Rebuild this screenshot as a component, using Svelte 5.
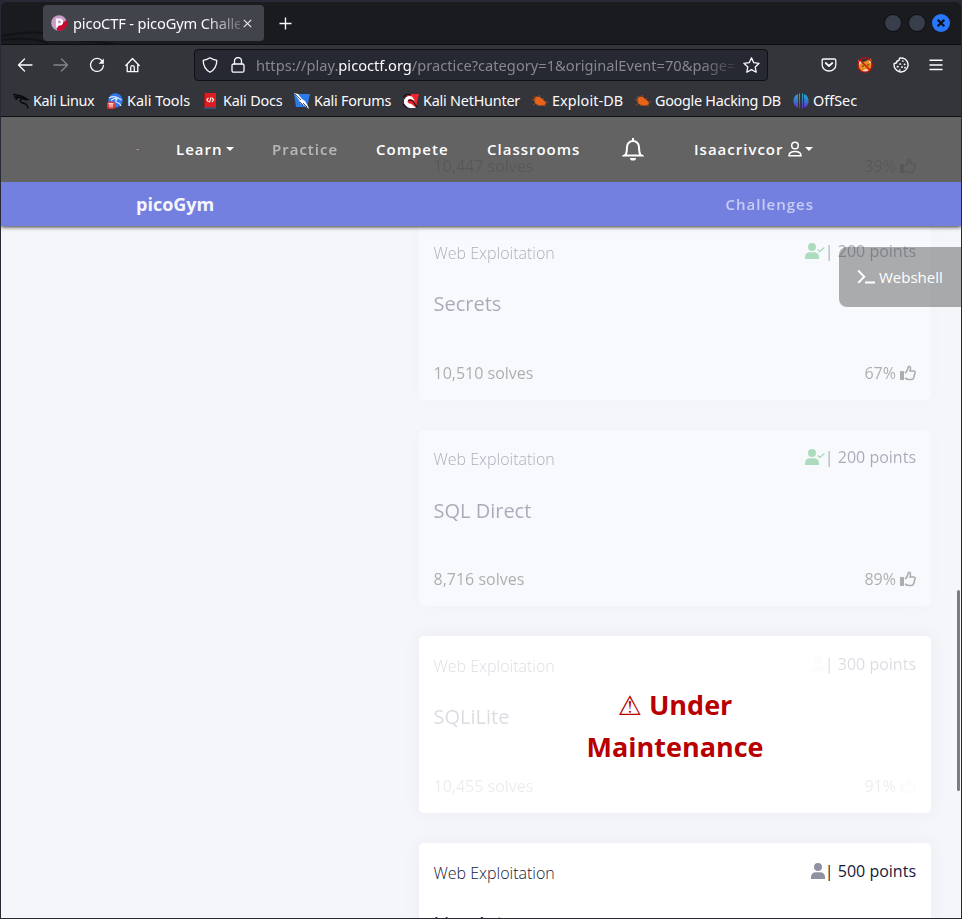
<script>
  const bookmarks = [
    { label: 'Kali Linux', icon: 'dragon', w: 94, spacing: -0.35 },
    { label: 'Kali Tools', icon: 'tools', w: 96, spacing: 0 },
    { label: 'Kali Docs', icon: 'docs', w: 91, spacing: -0.2 },
    { label: 'Kali Forums', icon: 'forums', w: 109, spacing: -0.22 },
    { label: 'Kali NetHunter', icon: 'hunter', w: 129, spacing: -0.22 },
    { label: 'Exploit-DB', icon: 'bug', w: 103, spacing: 0.1 },
    { label: 'Google Hacking DB', icon: 'bug', w: 158, spacing: -0.28 },
    { label: 'OffSec', icon: 'offsec', w: 80, spacing: 0 }
  ];

  const cards = [
    { title: 'More Cookies', points: 200, solves: '10,447', rating: 39, state: 'solved' },
    { title: 'Secrets', points: 200, solves: '10,510', rating: 67, state: 'solved' },
    { title: 'SQL Direct', points: 200, solves: '8,716', rating: 89, state: 'solved' },
    { title: 'SQLiLite', points: 300, solves: '10,455', rating: 91, state: 'maintenance' },
    { title: 'Live Art', points: 500, solves: '196', rating: 60, state: 'open' }
  ];
</script>

{#snippet bookmarkIcon(kind)}
  <svg width="16" height="16" viewBox="0 0 16 16">
    {#if kind === 'dragon'}
      <path d="M0 1.500 5 2.300 9.500 3.500M1 4.500 5 3.500M2.500 7C4 4.500 7 3.500 10.500 5.500M9.500 3.500 14.500 6.500 12 6.500 10.500 5.500C7 5.500 6 8.500 9 9.800 12 10.500 14.500 11 15 15.500" fill="none" stroke="#08090b" stroke-width="1.500"/>
    {:else if kind === 'tools'}
      <circle cx="8.500" cy="7.500" r="7.200" fill="#3279ed"/>
      <path d="M2 5Q7 2 12 5.500L14.500 7M4 7.500Q8 4 10 6 7.500 8.500 10 9.500 13 10 14 13" stroke="#d9e9ff" stroke-width="1.200" fill="none"/>
      <rect x="0" y="8.500" width="8" height="7.500" rx="2.500" fill="#e3383b"/><path d="M1.500 10.700H6.500M3 11V14.300M5 11V14.300" stroke="#fff" stroke-width="1"/>
    {:else if kind === 'docs'}
      <path d="M1 0H13V16H1Z" fill="#dc1e22"/><path d="M1 14.300H13V16H1Z" fill="#31527b"/><path d="M1 0H2.200V14.300H1Z" fill="#9d161b"/><path d="m5.500 4.800-1.700 2 1.700 2M9 4.800l1.700 2-1.700 2M8.100 4.300 6.500 9.300" stroke="#fff" stroke-width="1.100" fill="none"/>
    {:else if kind === 'forums'}
      <path d="M0 1H16L13 14H2Z" fill="#2c7bea"/><path d="m0 0 4 1 4 5 3 2 3 5 1 3-5-4-3-1-2-4Z" fill="#fff"/><path d="m1 1 6 6M6 9l3 3M9 10l4 4" stroke="#252a33" stroke-width=".8"/>
    {:else if kind === 'hunter'}
      <path d="M4 1H16L13 14H2Z" fill="#ef2632"/><path d="M1 7Q4 1.500 9 3.500L12 8 9 6.500Q5 5 4.500 8.500 5 10.500 8.500 11L13 15H7Q2 14 1 10Z" fill="#fff"/><path d="M0 4Q4 0 8 2M5.500 8Q8 6 10 8.500L14 14M0 11l4 4" stroke="#0d1015" stroke-width="1.200" fill="none"/>
    {:else if kind === 'bug'}
      <path d="m2.500 5.500 2-2 3 .5 3 2 2.500 2.500 1 2.500-3 1.500H7L4 11 2.500 8.500Z" fill="#e96418"/><path d="m0 6.500 4 1M2 3l2 3M7 2l1 3M12 5l-2 2M13 9h3M11 12l3 1M4 10 1 12M6 11l-1 2" stroke="#b9531e" stroke-width=".8"/>
    {:else}
      <defs><linearGradient id="off" gradientUnits="userSpaceOnUse" x1="0" y1="0" x2="0" y2="16"><stop stop-color="#24b3c8"/><stop offset=".55" stop-color="#376fca"/><stop offset="1" stop-color="#6b23c4"/></linearGradient></defs>
      <path d="M5 1V15Q.4 13 .4 8T5 1Z" fill="url(#off)"/><path d="M6 .6H7V15.400H6ZM9 .6H10V15.400H9Z" fill="url(#off)"/><path d="M11 1Q15.600 3 15.600 8T11 15Z" fill="url(#off)"/>
    {/if}
  </svg>
{/snippet}

{#snippet person(solved)}
  <svg class="person" width={solved ? 20 : 14} height="16" viewBox={solved ? '0 0 20 16' : '0 0 14 16'}>
    <circle cx="7" cy="4" r="4" fill="currentColor"/><path d="M0 16v-2c0-3 2-4.700 5-4.700h4c3 0 5 1.700 5 4.700v2Z" fill="currentColor"/>
    {#if solved}<path d="m12.800 6.500 2 2L19.400 4.500" fill="none" stroke="currentColor" stroke-width="1.500"/>{/if}
  </svg>
{/snippet}

<div class="window">
  <div class="titlebar">
    <svg class="swirl" width="130" height="44" viewBox="0 0 130 44"><path d="M0 35Q24 30 42 32M0 39Q35 35 50 44M42 39Q80 38 120 44" fill="none" stroke="#121317" stroke-width="2"/></svg>
    <div class="tab">
      <svg width="16" height="16" viewBox="0 0 16 16"><circle cx="8" cy="8" r="7.800" fill="#c99bc9"/><path d="M6 15.500V12L10 9 15.500 5A7.800 7.800 0 0 1 6 15.500Z" fill="#c5092f"/><path d="M6 12.500V4.500H8.500Q11 4.500 11 7T8.500 9.300H6" fill="none" stroke="#fff" stroke-width="2.200"/></svg>
      <span class="tabtext">picoCTF - picoGym Challenges</span>
      <svg class="close" width="9" height="9" viewBox="0 0 9 9"><path d="m.8.8 7.400 7.400M8.200.8.800 8.200" stroke="#e9e9ed" stroke-width="1.200"/></svg>
    </div>
    <svg class="plus" width="13" height="13" viewBox="0 0 13 13"><path d="M6.500.5v12M.5 6.500h12" stroke="#fbfbfe" stroke-width="1.400"/></svg>
    <div class="controls"><i></i><i></i>
      <svg width="18" height="18" viewBox="0 0 18 18"><circle cx="9" cy="9" r="9" fill="#2777ff"/><path d="m5.700 5.700 6.600 6.600M12.300 5.700l-6.600 6.600" stroke="#10131b" stroke-width="2.300"/></svg>
    </div>
  </div>

  <div class="toolbar">
    <div class="left">
      <svg width="16" height="16" viewBox="0 0 16 16"><path d="M15 8H1.500M7.500 2 1.500 8l6 6"/></svg>
      <svg class="dim" width="16" height="16" viewBox="0 0 16 16"><path d="M1 8h13.500M8.500 2l6 6-6 6"/></svg>
      <svg width="16" height="16" viewBox="0 0 16 16"><path d="M13.200 4A6.500 6.500 0 1 0 14.500 8.500"/><path class="fill" d="M14.800 1.500v5.200H9.600Z"/></svg>
      <svg width="16" height="16" viewBox="0 0 16 16"><path d="M.8 8.500 7.500 1.500l6.700 7M2.200 7.500v7.200h10.600V7.500M5.700 14.500v-4a1.800 1.800 0 0 1 3.600 0v4"/></svg>
    </div>
    <div class="url">
      <svg width="16" height="16" viewBox="0 0 16 16"><path d="M8 .8Q11 2.700 14.800 3.300 14.800 11.500 8 15.300 1.200 11.500 1.200 3.300 5 2.700 8 .8Z"/></svg>
      <svg class="lock" width="14" height="16" viewBox="0 0 14 16"><rect x="1" y="7" width="12" height="8.200" rx="1.500"/><path d="M3.500 7V4a3.500 3.500 0 0 1 7 0v3"/></svg>
      <span class="address">https://play.<b>picoctf.org</b>/practice?category=1&amp;originalEvent=70&amp;page=2</span>
      <svg class="star" width="17" height="16" viewBox="0 0 17 16"><path d="m8.500.9 2.300 4.800 5.300.6-3.900 3.700 1 5.200-4.700-2.600-4.700 2.600 1-5.200L.9 6.300l5.300-.6Z"/></svg>
    </div>
    <div class="right">
      <svg width="16" height="16" viewBox="0 0 16 16"><path d="M2.500 2h11q1.300 0 1.300 1.300V8A6.800 6 0 0 1 1.200 8V3.300Q1.200 2 2.500 2Z"/><path d="M4.700 6 8 9l3.300-3" stroke-width="1.700"/></svg>
      <svg class="fox" width="16" height="16" viewBox="0 0 16 16"><path d="M1 3 5 5 8 4.500 14 1.500 15 7 13 13 10 15H5L2 11Z" fill="#e88a1c"/><path d="m1.500 3 3 2-2 3.500ZM14 2l-2.500 3.500 3 1ZM5 14.500 8 12l3.500 1-1.500 2Z" fill="#ecd9c8"/><path d="M5 9h2M10 8h2" stroke="#5f3210"/><circle cx="8" cy="8" r="7.200" fill="none" stroke="#c30d12" stroke-width="1.300"/><path d="m3 3 10 10" stroke="#c30d12" stroke-width="1.300"/></svg>
      <svg width="16" height="16" viewBox="0 0 16 16"><path d="M6.500 1.200Q8 .7 10 1.200A7 7 0 1 1 1.200 6.500Q4 6.500 4 4 6.600 4 6.500 1.200Z" stroke-width="1.400"/><path d="M9.800 4h.1M7 7h.4M11.500 7.300h.2M4.500 9.700h.4M8.800 10h.4M6.700 13h.1M12 10.700h.1" stroke-width="1.700"/></svg>
      <svg width="14" height="16" viewBox="0 0 14 16"><path d="M1 3.200h12M1 7.900h12M1 12.600h12" stroke-width="1.500"/></svg>
    </div>
  </div>

  <div class="bookmarks">
    {#each bookmarks as b}
      <span class="bookmark" style:width="{b.w}px" style:letter-spacing="{b.spacing}px">{@render bookmarkIcon(b.icon)}{b.label}</span>
    {/each}
  </div>

  <div class="page">
    <header>
      <nav>
        <span class="speck"></span>
        <span>Learn<i class="caret"></i></span>
        <span class="active">Practice</span>
        <span>Compete</span>
        <span>Classrooms</span>
        <svg width="22" height="24" viewBox="0 0 22 24"><path d="M3.800 17.500Q5 15 5 10a6 6 0 0 1 12 0q0 5 1.200 7.500l1.600 1H2.200Z" fill="none" stroke="#fff" stroke-width="2"/><path d="M10 1h2v3h-2ZM8 21h6a3 2.600 0 0 1-6 0" fill="#fff"/></svg>
        <span class="user">Isaacrivcor
          <svg width="14" height="16" viewBox="0 0 14 16"><circle cx="7" cy="4.500" r="3.300"/><path d="M1 14.700Q1 10.400 7 10.400t6 4.300Z"/></svg><i class="caret"></i></span>
      </nav>
      <div class="subnav"><strong>picoGym</strong><span>Challenges</span></div>
    </header>

    <main>
      {#each cards as c}
        <article class={c.state}>
          <div class="body">
            <div class="row top">
              <span class="category">Web Exploitation</span>
              <span class="points">{@render person(c.state === 'solved')}<span>| {c.points} points</span></span>
            </div>
            <h5>{c.title}</h5>
            <div class="row foot">
              <span>{c.solves} solves</span>
              <span class="rating">{c.rating}%
                <svg width="16" height="16" viewBox="0 0 16 16"><rect x="0" y="6" width="4" height="9" rx=".7" fill="currentColor"/><path d="M5 8Q7 6.500 7.600 4.200 7.800 1.600 9.200 1.300 11.300 1.800 10 6h4q1.500.5 1 2l-.5 1.500-.5 2.300-.8 1.800q-.5.900-2 .9H9Q7 14.500 5 13" fill="none" stroke="currentColor" stroke-width="1.600"/></svg>
              </span>
            </div>
          </div>
          {#if c.state === 'maintenance'}
            <div class="notice"><span class="warn">⚠</span> Under<br>Maintenance</div>
          {/if}
        </article>
      {/each}
    </main>

    <aside>
      <svg width="18" height="16" viewBox="0 0 18 16"><path d="m1.200 1.500 6 6.200-6 6.200M8 13.500h10" fill="none" stroke="#fff" stroke-width="2"/></svg>Webshell
    </aside>
    <div class="scrollbar"></div>
  </div>
</div>

<style>
  :global(body) { background: #272a34; }
  .window, .window * { box-sizing: border-box; }
  .window {
    width: 962px; height: 919px; padding: 2px 1px 1px; overflow: hidden;
    background: #272a34; font: 14.670px 'Noto Sans', sans-serif; color: #fbfbfe;
    display: flex; flex-direction: column;
  }
  svg { flex: none; display: block; }
  .titlebar { height: 43px; background: #1a1b1f; border-radius: 6px 6px 0 0; border-bottom: 1px solid #0d0e11; display: flex; align-items: center; position: relative; padding-left: 42px; flex: none; }
  .swirl { position: absolute; left: 0; top: -1px; }
  .tab { position: relative; width: 221px; height: 36px; background: #42444b; border-radius: 4px; display: flex; align-items: center; padding: 0 8px; }
  .tabtext { margin-left: 6px; width: 167px; overflow: hidden; white-space: nowrap; letter-spacing: -.15px; mask-image: linear-gradient(90deg, #000 130px, transparent 178px); }
  .close { margin-left: 3px; }
  .plus { margin-left: 15px; }
  .controls { margin-left: auto; margin-right: 11px; display: flex; align-items: center; gap: 6px; }
  .controls i { width: 18px; height: 18px; border-radius: 50%; background: #383e4b; border: 1px solid #0c0e12; }

  .toolbar { height: 41px; flex: none; background: #33353b; display: flex; align-items: center; padding: 0 0 2px 16px; }
  .toolbar svg:not(.fox) { fill: none; stroke: #fbfbfe; stroke-width: 1.300; stroke-linejoin: round; stroke-linecap: round; }
  .toolbar .fill { fill: #fbfbfe; stroke: none; }
  .toolbar .dim { opacity: .4; }
  .left { display: flex; gap: 20px; width: 177px; }
  .url { width: 574px; height: 32px; border: 1px solid #0f1014; border-radius: 4px; background: #262832; display: flex; align-items: center; padding: 0 7px; }
  .lock { margin-left: 13px; }
  .address { margin-left: 11px; width: 479px; overflow: hidden; white-space: nowrap; color: #86878f; mask-image: linear-gradient(90deg, #000 445px, transparent 485px); }
  .address b { color: #fbfbfe; font-weight: 400; }
  .star { margin-left: auto; }
  .right { margin-left: auto; margin-right: 18px; display: flex; gap: 20px; }

  .bookmarks { height: 31px; flex: none; background: #33353b; border-bottom: 1px solid #0f1014; display: flex; align-items: center; padding: 0 0 2px 12px; }
  .bookmark { display: flex; align-items: center; gap: 4px; flex: none; white-space: nowrap; font-size: 14.400px; }
  .bookmark svg { margin-top: 1px; }

  .page { position: relative; flex: 1; min-height: 0; overflow: hidden; background: #f4f6fa; font-family: 'Open Sans', sans-serif; }
  header { position: absolute; z-index: 2; top: 0; left: 0; right: 0; box-shadow: 0 1px 4px rgba(0, 0, 0, .8); clip-path: inset(0 0 -10px 0); }
  nav { height: 64.500px; background: rgba(73, 73, 73, .850); display: grid; grid-template-columns: 40px 96px 104px 111px 135px 72px 130px; align-items: center; padding-left: 135px; font-size: 15px; font-weight: 600; letter-spacing: 1px; color: #fff; }
  .speck { width: 3px; height: 1px; background: linear-gradient(90deg, #c66575, #aaa); }
  .active { opacity: .550; }
  .caret { display: inline-block; border: 4.500px solid transparent; border-top-color: #fff; border-bottom: 0; margin-left: 3px; vertical-align: 4px; }
  .user { display: flex; align-items: center; white-space: nowrap; }
  .user svg { fill: none; stroke: #fff; stroke-width: 1.500; margin-left: 5px; }
  .subnav { height: 44.500px; background: #7480e0; display: flex; align-items: center; justify-content: space-between; padding: 0 147px 0 135px; color: #f4f5fd; font-size: 18px; }
  .subnav span { font-size: 15px; font-weight: 600; letter-spacing: 1px; opacity: .650; }

  main { margin: -100.700px 0 0 418px; width: 512px; display: flex; flex-direction: column; gap: 30px; }
  article { position: relative; flex: none; height: 176.660px; border-radius: 5px; background: #fff; box-shadow: 0 0 20px rgba(60, 65, 90, .05); color: #16193b; }
  .solved { background: rgba(255, 255, 255, .4); box-shadow: 0 0 20px rgba(60, 65, 90, .02); }
  .solved .body { opacity: .350; }
  .body { height: 100%; padding: 16.700px 15px 15px 14.500px; display: flex; flex-direction: column; font-size: 16px; line-height: 24px; }
  .row { display: flex; justify-content: space-between; }
  .category { font-weight: 300; padding-top: 1px; }
  .points { display: flex; margin-top: -1px; white-space: pre; }
  .person { color: #8f92a3; margin: 4px 0 0; }
  h5 { margin: 25.300px 0 0; font-size: 20px; line-height: 28px; font-weight: 400; }
  .solved .person { color: #22a94a; }
  .foot { margin-top: auto; color: #222; }
  .rating { display: flex; align-items: center; gap: 4px; }
  .maintenance .row, .maintenance h5 { opacity: .150; }
  .maintenance .foot { opacity: .080; }
  .maintenance .person, .maintenance .rating svg { opacity: .200; }
  .notice { position: absolute; inset: 0; display: flow-root; padding-top: 48px; text-align: center; font-size: 27px; line-height: 42px; font-weight: 700; color: #b80000; }
  .warn { font-family: 'DejaVu Sans', sans-serif; font-weight: 400; font-size: 27px; line-height: 1; }
  aside { position: absolute; z-index: 1; top: 130px; right: 0; width: 122px; height: 60px; border-radius: 8px 0 0 8px; background: rgba(85, 85, 85, .480); display: flex; align-items: center; gap: 4px; padding-left: 18px; font-size: 15px; color: #fff; }
  .scrollbar { position: absolute; right: 1px; top: 473px; width: 3px; height: 201px; border-radius: 2px; background: #7d7d80; }
</style>
